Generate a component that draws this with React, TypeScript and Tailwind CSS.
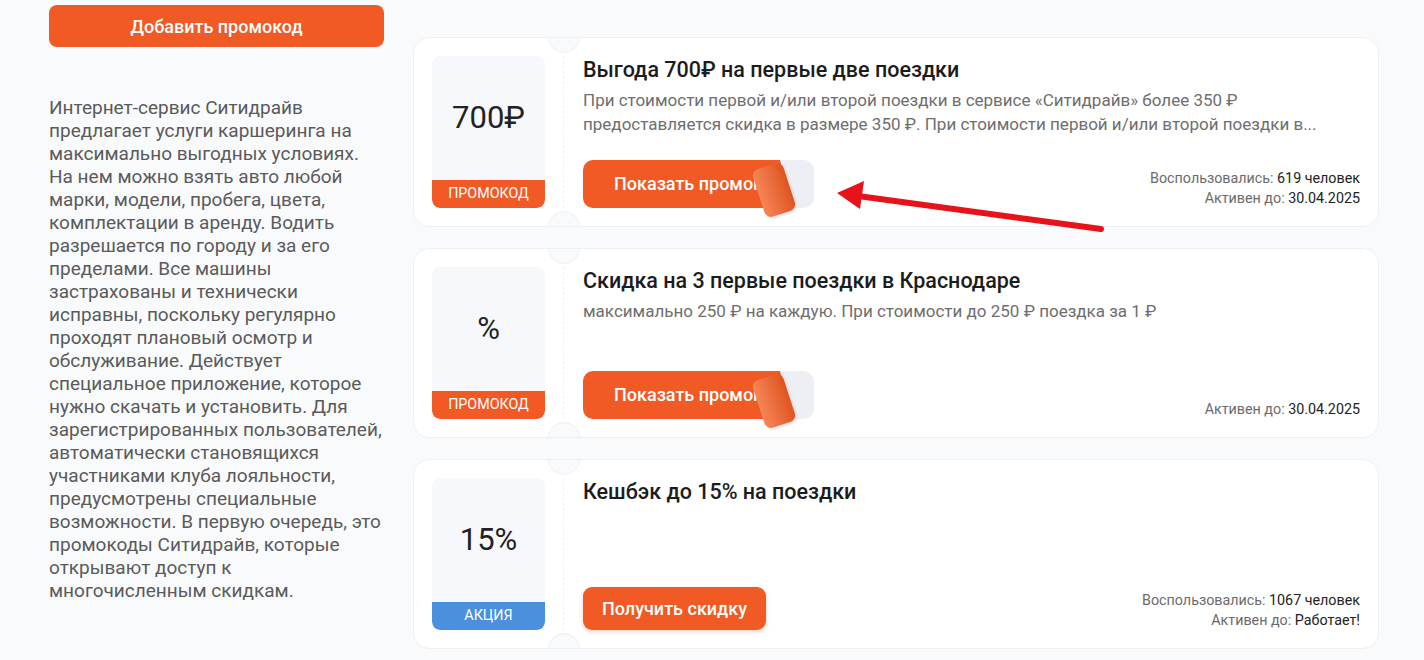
import React from "react"

type Offer = {
  value: string
  label: string
  labelColor: string
  title: string
  desc?: string
  button: string
  peel: boolean
  used?: string
  until: string
}

const offers: Offer[] = [
  {
    value: "700₽",
    label: "ПРОМОКОД",
    labelColor: "bg-[#f15a24]",
    title: "Выгода 700₽ на первые две поездки",
    desc: "При стоимости первой и/или второй поездки в сервисе «Ситидрайв» более 350 ₽ предоставляется скидка в размере 350 ₽. При стоимости первой и/или второй поездки в...",
    button: "Показать промокод",
    peel: true,
    used: "619 человек",
    until: "30.04.2025",
  },
  {
    value: "%",
    label: "ПРОМОКОД",
    labelColor: "bg-[#f15a24]",
    title: "Скидка на 3 первые поездки в Краснодаре",
    desc: "максимально 250 ₽ на каждую. При стоимости до 250 ₽ поездка за 1 ₽",
    button: "Показать промокод",
    peel: true,
    until: "30.04.2025",
  },
  {
    value: "15%",
    label: "АКЦИЯ",
    labelColor: "bg-[#4a90dc]",
    title: "Кешбэк до 15% на поездки",
    button: "Получить скидку",
    peel: false,
    used: "1067 человек",
    until: "Работает!",
  },
]

function PeelButton({ text }: { text: string }) {
  return (
    <div className="relative w-[231px] h-[48px] rounded-[10px] bg-[#eeeff4]">
      <div className="absolute inset-0 rounded-[10px] bg-[#f15a24] [clip-path:polygon(0_0,197px_0,209px_100%,0_100%)]">
        <span className="absolute left-[31px] top-[12px] text-[18px] leading-[24px] font-medium text-white whitespace-nowrap">
          {text}
        </span>
      </div>
      <div className="absolute left-[175px] top-[5px] w-[32px] h-[50px] rounded-[7px] bg-gradient-to-r from-[#f58656] to-[#df531d] -rotate-[18deg] shadow-[1px_2px_3px_rgba(0,0,0,0.12)]" />
    </div>
  )
}

function OfferCard({ o }: { o: Offer }) {
  return (
    <div className="relative h-[190px] rounded-2xl bg-white border border-[#eef0f3] flex p-[18px] overflow-hidden">
      <div className="absolute left-[134px] -top-[17px] w-[32px] h-[32px] rounded-full bg-[#f9fafc] border border-[#eceef2]" />
      <div className="absolute left-[134px] -bottom-[17px] w-[32px] h-[32px] rounded-full bg-[#f9fafc] border border-[#eceef2]" />
      <div className="w-[113px] shrink-0 flex flex-col rounded-lg bg-[#f7f8fb] overflow-hidden">
        <div className="flex-1 flex items-center justify-center text-[31px] text-[#222]">{o.value}</div>
        <div className={`${o.labelColor} h-[28px] flex items-center justify-center text-[14.3px] text-white rounded-b-lg`}>
          {o.label}
        </div>
      </div>
      <div className="ml-[18px] mr-[19px] border-l border-dashed border-[#f0f1f4]" />
      <div className="flex-1 flex flex-col justify-between">
        <div>
          <div className="text-[21.5px] leading-[28px] font-medium text-[#1c1c1c]">{o.title}</div>
          {o.desc && (
            <div className="mt-[4px] text-[17px] leading-[24px] text-[#6e6e6e] pr-[40px]">{o.desc}</div>
          )}
        </div>
        <div className="flex items-end justify-between">
          {o.peel ? (
            <PeelButton text={o.button} />
          ) : (
            <div className="h-[43px] px-[19px] rounded-[9px] bg-[#f15a24] flex items-center text-[18px] font-medium text-white shadow-[0_2px_4px_rgba(241,90,36,0.25)]">
              {o.button}
            </div>
          )}
          <div className="text-right text-[14.3px] leading-[20px] text-[#6b6b6b]">
            {o.used && (
              <div>
                Воспользовались: <span className="text-[#222]">{o.used}</span>
              </div>
            )}
            <div>
              Активен до: <span className="text-[#222]">{o.until}</span>
            </div>
          </div>
        </div>
      </div>
    </div>
  )
}

export default function App() {
  return (
    <div className="relative min-h-screen bg-[#f9fafc] flex gap-[29px] pl-[49px] pt-[5px] font-['Roboto',sans-serif]">
      <div className="w-[335px] shrink-0">
        <div className="h-[42px] rounded-lg bg-[#f15a24] flex items-center justify-center text-[18px] font-medium text-white">
          Добавить промокод
        </div>
        <p className="mt-[49px] w-[336px] text-[19px] leading-[23px] text-[#5a5a5a]">
          Интернет-сервис Ситидрайв предлагает услуги каршеринга на максимально выгодных условиях. На нем можно взять
          авто любой марки, модели, пробега, цвета, комплектации в аренду. Водить разрешается по городу и за его
          пределами. Все машины застрахованы и технически исправны, поскольку регулярно проходят плановый осмотр и
          обслуживание. Действует специальное приложение, которое нужно скачать и установить. Для зарегистрированных
          пользователей, автоматически становящихся участниками клуба лояльности, предусмотрены специальные
          возможности. В первую очередь, это промокоды Ситидрайв, которые открывают доступ к многочисленным скидкам.
        </p>
      </div>
      <div className="w-[966px] mt-[32px] flex flex-col gap-[21px]">
        {offers.map((o, i) => (
          <OfferCard key={i} o={o} />
        ))}
      </div>
      {/* red arrow annotation */}
      <svg className="absolute left-0 top-0 pointer-events-none" width="1424" height="660">
        <line x1="1101" y1="229" x2="858" y2="196" stroke="#e8121a" strokeWidth="6" strokeLinecap="round" />
        <polygon points="837,193 864,181 860,209" fill="#e8121a" />
      </svg>
    </div>
  )
}
